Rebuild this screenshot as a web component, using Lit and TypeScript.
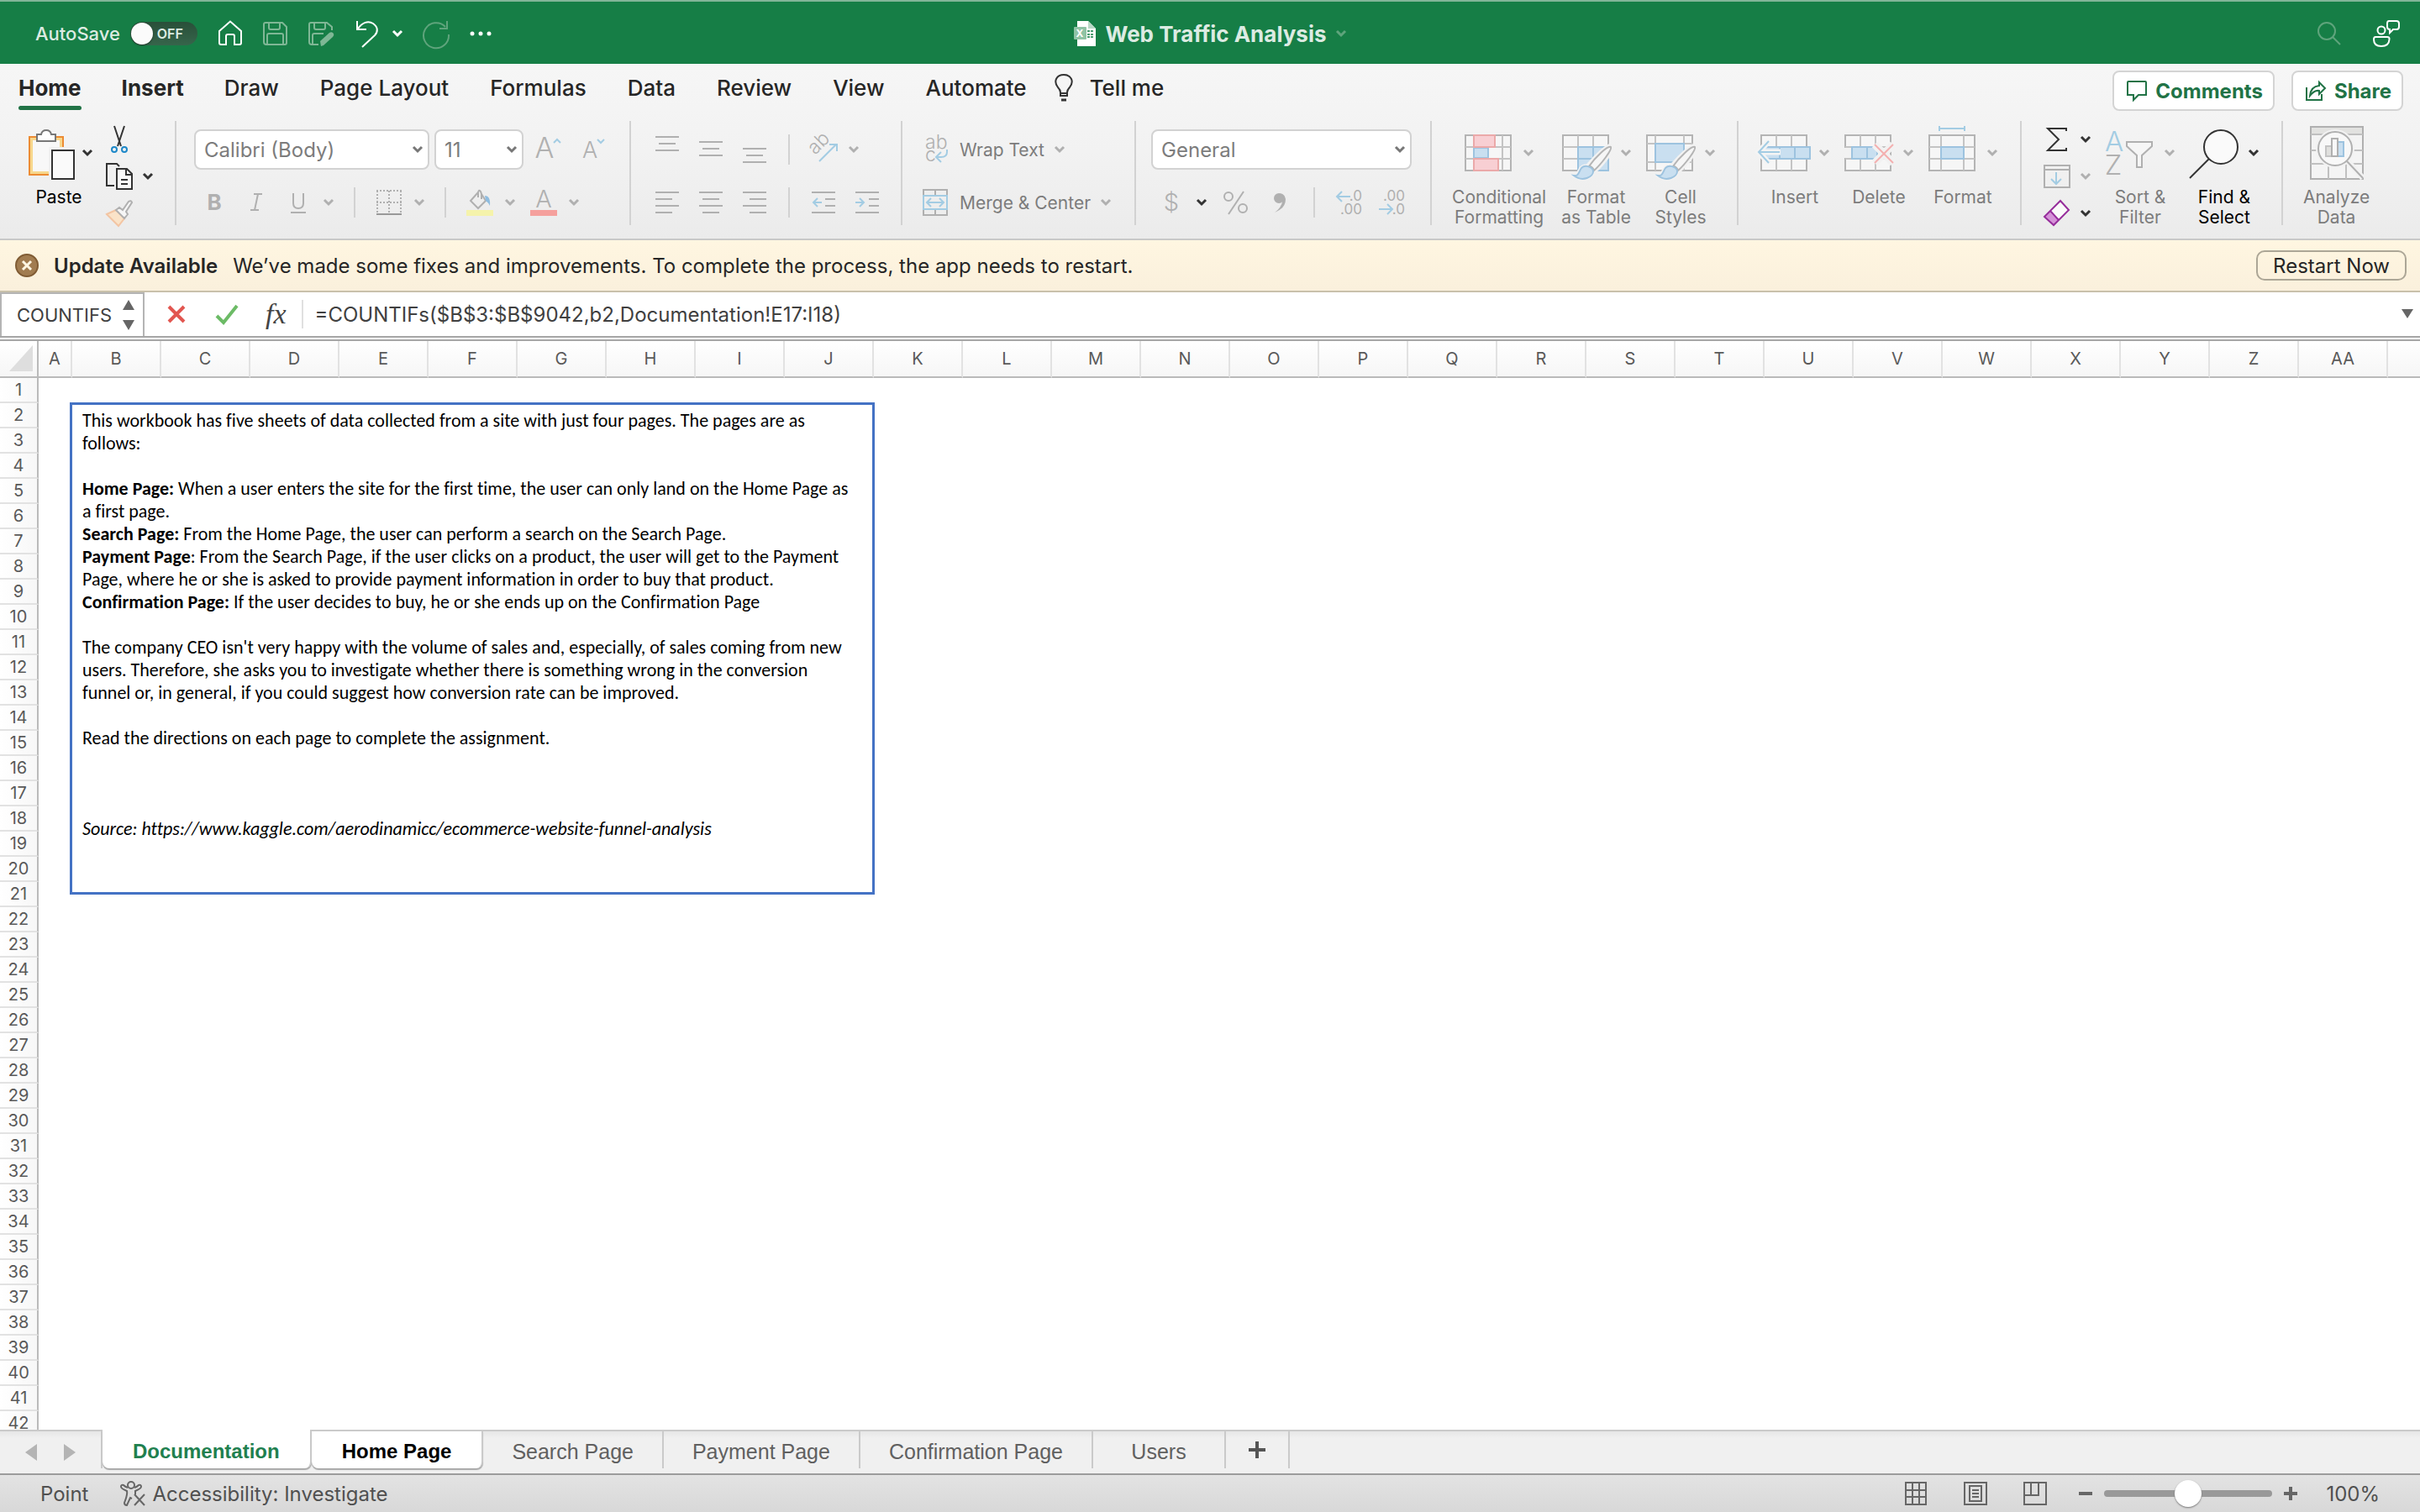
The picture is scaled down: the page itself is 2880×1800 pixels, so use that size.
import { LitElement, html, svg, css, nothing, TemplateResult, SVGTemplateResult } from "lit";
import { customElement, property, state } from "lit/decorators.js";
import { classMap } from "lit/directives/class-map.js";

const G = "#b0b0b0";
const B = "#a3cce3";
const D = "#333";
const GRID = "#b4b4b4";
const BLUE_LINE = "#9dc3df";
const BLUE_FILL = "#c9dff0";

type Icon = { w: number; h: number; art: SVGTemplateResult };

const brush = svg`
  <path d="M59 24 C61 27 46 46 39 52 L33 46 C40 38 55 23 59 24z" fill="#f6f6f6" stroke="#f2f2f2" stroke-width="7"/>
  <path d="M14 59 C20 59 20 54 23 50 C27 46 35 48 37 53 C38 61 24 67 14 59z" fill="#f2f2f2" stroke="#f2f2f2" stroke-width="5"/>
  <path d="M58 25 C60 28 46 46 38 53 C37 50 35 48 32 48 C39 38 54 23 58 25z" fill="#f6f6f6" stroke="${GRID}" stroke-width="2"/>
  <path d="M14 59 C20 60 20 54 23 50 C27 46 35 48 37 53 C38 61 24 67 14 59z" fill="${BLUE_FILL}" stroke="${BLUE_LINE}" stroke-width="2"/>`;

const lines = (rows: number[][]) => svg`<path d="${rows.map(([x, y, w]) => `M${x} ${y}h${w}`).join("")}" stroke="${G}" stroke-width="2"/>`;

const icons: Record<string, Icon> = {
  home: { w: 30, h: 32, art: svg`<path d="M2 13 L15 1.500 L28 13 V27 Q28 29 26 29 H20 V19 Q20 17 18 17 H12 Q10 17 10 19 V29 H4 Q2 29 2 27z" stroke="#fff" stroke-width="2"/>` },
  save: { w: 30, h: 32, art: svg`<g stroke="#7fb795" stroke-width="2"><path d="M3 3 H23 L28 8 V27 Q28 29 26 29 H4 Q1 29 1 26 V5 Q1 3 3 3z"/><path d="M7 3 V9 Q7 11 9 11 H18 Q20 11 20 9 V3"/><path d="M5 29 V18 Q5 16 7 16 H22 Q24 16 24 18 V29"/></g>` },
  saveAs: { w: 32, h: 32, art: svg`<g stroke="#7fb795" stroke-width="2"><path d="M12 29 H4 Q1 29 1 26 V5 Q1 3 3 3 H22 L28 8 V12"/><path d="M7 3 V9 Q7 11 9 11 H18 Q20 11 20 9 V3"/><path d="M5 29 V18 Q5 16 7 16 H18"/></g><path d="M15 31 L14 25 L25 15 Q28 13 30 16 Q31 18 29 20 L18 30z" fill="#7fb795"/>` },
  undo: { w: 28, h: 32, art: svg`<path d="M2 1 V11 H13 M3 10 C8 3 15 0 21 4 C27 8 27 14 23 18 L8 32" stroke="#fff" stroke-width="2"/>` },
  redo: { w: 32, h: 32, art: svg`<path d="M29 1 V10 H20 M27 8 A15 15 0 1 0 31 17" stroke="#5fa47c" stroke-width="2"/>` },
  dots: { w: 26, h: 32, art: svg`<g fill="#fff"><circle cx="3" cy="16" r="2.500"/><circle cx="13" cy="16" r="2.500"/><circle cx="23" cy="16" r="2.500"/></g>` },
  workbook: { w: 26, h: 30, art: svg`<path d="M4 0 H17 L26 9 V30 H4z" fill="#fff"/><path d="M17 0 V9 H26z" fill="#b9d8c6"/><rect y="7" width="15" height="15" rx="1" fill="#8fc3a5"/><path d="M16 12h3m1 0h3M16 16h3m1 0h3M16 19h3m1 0h3" stroke="#4a9c70" stroke-width="2"/><text x="7" y="19" text-anchor="middle" font-size="12" font-weight="700" fill="#fff">X</text>` },
  search: { w: 28, h: 28, art: svg`<g stroke="#5fa47c" stroke-width="2"><circle cx="11" cy="11" r="10"/><path d="M18 18 L27 27"/></g>` },
  person: { w: 32, h: 32, art: svg`<g stroke="#fff" stroke-width="2"><circle cx="10" cy="12" r="4.500"/><path d="M3 20 H17 Q20 20 19.500 23 Q19 31 10 31 Q1 31 1 23 Q1 20 3 20z"/><path d="M19 1 H28 Q31 1 31 4 V8 Q31 11 28 11 H24 L20 15 V11 Q17 11 17 8 V4 Q17 1 19 1z"/></g>` },
  bulb: { w: 22, h: 36, art: svg`<path d="M7 27 V23 Q7 20 4 17 C-2 9 3 2 11 2 C19 2 24 9 18 17 Q15 20 15 23 V27z M7 24 H15 M8 32h6" stroke="${D}" stroke-width="2"/><path d="M8 32h6" stroke="${D}" stroke-width="3"/>` },
  comment: { w: 24, h: 24, art: svg`<path d="M1 2 Q1 1 2 1 H22 Q23 1 23 2 V17 H14 L8 23 V17 H1z" stroke="#217346" stroke-width="2"/>` },
  share: { w: 24, h: 24, art: svg`<path d="M1 8 V23 H19 V16" stroke="#217346" stroke-width="2"/><path d="M16 2 L23 9 L16 16 V12 Q10 11 5 18 Q6 7 16 6z" stroke="#217346" stroke-width="2"/>` },
  paste: { w: 58, h: 64, art: svg`<rect x="5" y="13" width="40" height="45" fill="#f7d78c" stroke="#ec8b33" stroke-width="2"/><rect x="9" y="17" width="32" height="37" fill="#f8f8f8"/><path d="M14 10 H19 Q20 5 25 5 Q30 5 31 10 H36 V18 H14z" fill="#fff" stroke="#777" stroke-width="2"/><rect x="28" y="25" width="32" height="39" fill="#f2f2f2"/><rect x="32" y="29" width="26" height="34" fill="#fafafa" stroke="${D}" stroke-width="2"/>` },
  cut: { w: 32, h: 32, art: svg`<path d="M10 0 L18 24 M22 0 L14 24" stroke="${D}" stroke-width="2"/><g stroke="#1e88c8" stroke-width="2"><circle cx="10" cy="28" r="3"/><circle cx="22" cy="28" r="3"/></g>` },
  copy: { w: 32, h: 32, art: svg`<g stroke="${D}" stroke-width="2"><path d="M10 27 H1 V1 H13 L16 4"/><path d="M13 7 H25 L31 13 V31 H13z" fill="#fafafa"/><path d="M24 7 V14 H31 M18 20h8 M18 25h8"/></g>` },
  painter: { w: 32, h: 32, art: svg`<path d="M1 17 L12 12 L22 22 L15 31z" fill="#fae3c8" stroke="#f3c5a3" stroke-width="2"/><path d="M12 12 L16 9 L20 12 L27 2 Q30 0 31 3 L24 14 L26 17 L22 22z" fill="#f6f6f6" stroke="${G}" stroke-width="2"/>` },
  growFont: { w: 32, h: 32, art: svg`<text x="11" y="26" text-anchor="middle" font-size="34" font-weight="300" fill="${G}">A</text><path d="M22 8 L26 4 L30 8" stroke="${B}" stroke-width="2"/>` },
  shrinkFont: { w: 32, h: 32, art: svg`<text x="11" y="26" text-anchor="middle" font-size="27" font-weight="300" fill="${G}">A</text><path d="M20 4 L24 8 L28 4" stroke="${B}" stroke-width="2"/>` },
  bold: { w: 32, h: 32, art: svg`<text x="16" y="25" text-anchor="middle" font-size="26" font-weight="700" fill="${G}">B</text>` },
  italic: { w: 32, h: 32, art: svg`<path d="M13 6h10M9 25h10M18 6l-4 19" stroke="${G}" stroke-width="2"/>` },
  underline: { w: 32, h: 32, art: svg`<path d="M10 5v12q0 6 6 6q6 0 6-6v-12M7 28h18" stroke="${G}" stroke-width="2"/>` },
  borders: { w: 32, h: 32, art: svg`<path d="M1 2H31M1 16H31" stroke="${G}" stroke-width="2" stroke-dasharray="2 2"/><path d="M2 2V28M16 2V28M30 2V28" stroke="${G}" stroke-width="2" stroke-dasharray="2 2"/><path d="M1 30H31" stroke="#999" stroke-width="2"/>` },
  fill: { w: 32, h: 32, art: svg`<rect y="25" width="32" height="7" fill="#f5f3ab"/><path d="M14 4 L5 14 L14 23 L23 14 L18 6 V12 M14 10 V4 Q15 0 17 3 L18 6" stroke="${G}" stroke-width="2"/><path d="M22 8 Q29 8 28 20 Q26 16 23 14z" fill="#8fbde0"/>` },
  fontColor: { w: 32, h: 32, art: svg`<rect y="25" width="32" height="7" fill="#f5a09d"/><text x="16" y="22" text-anchor="middle" font-size="29" font-weight="300" fill="${G}">A</text>` },
  vTop: { w: 28, h: 32, art: lines([[0, 1, 28], [4, 9, 20], [0, 17, 28]]) },
  vMid: { w: 28, h: 32, art: lines([[0, 7, 28], [4, 15, 20], [0, 23, 28]]) },
  vBottom: { w: 28, h: 32, art: lines([[0, 15, 28], [4, 23, 20], [0, 31, 28]]) },
  left: { w: 28, h: 32, art: lines([[0, 4, 28], [0, 12, 20], [0, 20, 28], [0, 28, 20]]) },
  center: { w: 28, h: 32, art: lines([[0, 4, 28], [4, 12, 20], [0, 20, 28], [4, 28, 20]]) },
  right: { w: 28, h: 32, art: lines([[0, 4, 28], [8, 12, 20], [0, 20, 28], [8, 28, 20]]) },
  outdent: { w: 28, h: 32, art: svg`${lines([[0, 4, 28], [16, 12, 12], [16, 20, 12], [0, 28, 28]])}<path d="M12 16H2M7 11L2 16L7 21" stroke="${B}" stroke-width="2"/>` },
  indent: { w: 28, h: 32, art: svg`${lines([[0, 4, 28], [16, 12, 12], [16, 20, 12], [0, 28, 28]])}<path d="M0 16H10M5 11L10 16L5 21" stroke="${B}" stroke-width="2"/>` },
  orient: { w: 32, h: 32, art: svg`<text x="4" y="23" font-size="23" font-weight="300" fill="${G}" transform="rotate(-45 4 23)">ab</text><path d="M9 30L29 10M21 10H30V18" stroke="${B}" stroke-width="2"/>` },
  wrap: { w: 32, h: 32, art: svg`<g font-size="23" font-weight="300" fill="${G}"><text x="3" y="15">ab</text><text x="3" y="30">c</text></g><path d="M29 16V19Q29 25 22 25H16M22 19L16 25L22 31" stroke="${B}" stroke-width="2"/>` },
  merge: { w: 32, h: 32, art: svg`<g stroke="${G}" stroke-width="2"><path d="M1 8V1H29V8M1 24V31H29V24M15 1V8M15 24V31"/></g><g stroke="${B}" stroke-width="2"><rect x="1" y="8" width="28" height="16"/><path d="M5 16H25M10 11L5 16L10 21M20 11L25 16L20 21"/></g>` },
  dollar: { w: 32, h: 32, art: svg`<text x="16" y="26" text-anchor="middle" font-size="29" font-weight="300" fill="${G}">$</text>` },
  percent: { w: 32, h: 32, art: svg`<g stroke="${G}" stroke-width="2"><circle cx="7" cy="9" r="5"/><circle cx="24" cy="23" r="5"/><path d="M25 3L7 30"/></g>` },
  comma: { w: 32, h: 32, art: svg`<path d="M16 5A6 6 0 1 0 16 17Q19 17 20 15Q19 22 11 28Q24 23 24 12Q23 5 16 5z" fill="${G}"/>` },
  incDec: { w: 32, h: 32, art: svg`<g font-size="17" fill="${G}" text-anchor="end"><text x="31" y="14">.0</text><text x="31" y="30">.00</text></g><path d="M17 9H1M7 3L1 9L7 15" stroke="${B}" stroke-width="2"/>` },
  decDec: { w: 32, h: 32, art: svg`<g font-size="17" fill="${G}" text-anchor="end"><text x="31" y="14">.00</text><text x="31" y="30">.0</text></g><path d="M0 24H16M10 18L16 24L10 30" stroke="${B}" stroke-width="2"/>` },
  conditional: { w: 60, h: 64, art: svg`<rect x="1" y="11" width="54" height="42" fill="#f6f6f6" stroke="${GRID}" stroke-width="2"/><path d="M1 25H55M1 39H55M45 11V53M36 11V25" stroke="#c4c4c4" stroke-width="2"/><rect x="11" y="26" width="17" height="12" fill="${BLUE_FILL}" stroke="${BLUE_LINE}" stroke-width="2"/><rect x="11" y="11" width="25" height="14" fill="#f8cfd3" stroke="#eba9a9" stroke-width="2"/><rect x="11" y="39" width="29" height="14" fill="#f8cfd3" stroke="#eba9a9" stroke-width="2"/>` },
  formatTable: { w: 60, h: 64, art: svg`<rect x="1" y="11" width="54" height="42" fill="#f6f6f6" stroke="${GRID}" stroke-width="2"/><path d="M1 25H55M1 39H19M19 11V53M37 11V25" stroke="#c4c4c4" stroke-width="2"/><rect x="19" y="25" width="36" height="28" fill="${BLUE_FILL}" stroke="${BLUE_LINE}" stroke-width="2"/><path d="M37 25V53M19 39H55" stroke="${BLUE_LINE}" stroke-width="2"/>${brush}` },
  cellStyles: { w: 60, h: 64, art: svg`<rect x="1" y="11" width="54" height="42" fill="#f6f6f6" stroke="${GRID}" stroke-width="2"/><path d="M1 21H55M1 43H55M11 11V53M45 11V53" stroke="#c4c4c4" stroke-width="2"/><rect x="11" y="21" width="34" height="22" fill="${BLUE_FILL}" stroke="${BLUE_LINE}" stroke-width="2"/>${brush}` },
  insertCells: { w: 60, h: 64, art: svg`<rect x="1" y="11" width="54" height="42" fill="#f6f6f6" stroke="${GRID}" stroke-width="2"/><path d="M19 11V53M37 11V53" stroke="#c4c4c4" stroke-width="2"/><rect x="5" y="25" width="54" height="14" fill="${BLUE_FILL}" stroke="${BLUE_LINE}" stroke-width="2"/><path d="M23 25V39M41 25V39" stroke="${BLUE_LINE}" stroke-width="2"/><path d="M24 31H-1M10 18L-2 31L10 44" stroke="#f4f4f4" stroke-width="7"/><path d="M23 31H-1M10 18L-2 31L10 44" stroke="${B}" stroke-width="2"/>` },
  deleteCells: { w: 60, h: 64, art: svg`<rect x="1" y="11" width="54" height="42" fill="#f6f6f6" stroke="${GRID}" stroke-width="2"/><path d="M19 11V53M37 11V53M1 25H55M1 39H55" stroke="#c4c4c4" stroke-width="2"/><rect x="0" y="26" width="9" height="12" fill="#f2f2f2"/><rect x="9" y="25" width="30" height="14" fill="${BLUE_FILL}" stroke="${BLUE_LINE}" stroke-width="2"/><path d="M27 25V39" stroke="${BLUE_LINE}" stroke-width="2"/><path d="M36 22L58 44M58 22L36 44" stroke="#f2f2f2" stroke-width="9"/><path d="M36 22L58 44M58 22L36 44" stroke="#f4b0b0" stroke-width="2"/>` },
  formatCells: { w: 60, h: 64, art: svg`<rect x="1" y="11" width="54" height="42" fill="#f6f6f6" stroke="${GRID}" stroke-width="2"/><path d="M1 25H55M1 39H55M15 11V53M42 11V53" stroke="#c4c4c4" stroke-width="2"/><rect x="15" y="25" width="27" height="14" fill="${BLUE_FILL}" stroke="${BLUE_LINE}" stroke-width="2"/><path d="M13 3H43M13 0V6M43 0V6" stroke="${B}" stroke-width="2"/>` },
  sum: { w: 32, h: 32, art: svg`<path d="M27 6V3H5L18 16L5 29H27V26" stroke="${D}" stroke-width="2"/>` },
  fillDown: { w: 32, h: 32, art: svg`<g stroke="${G}" stroke-width="2"><rect x="1" y="3" width="30" height="26"/><path d="M1 8H31"/></g><path d="M15 11V25M9 19L15 25L21 19" stroke="${B}" stroke-width="2"/>` },
  eraser: { w: 32, h: 32, art: svg`<path d="M1 20L20 1L30 12L12 30z" fill="#fafafa"/><path d="M1 20L8 13L18 24L12 30z" fill="#d592d8"/><path d="M1 20L20 1L30 12L12 30zM8 13L18 24" stroke="#962d9b" stroke-width="2"/>` },
  sortFilter: { w: 60, h: 64, art: svg`<text x="10" y="30" text-anchor="middle" font-size="33" font-weight="300" fill="${B}">A</text><text x="9" y="58" text-anchor="middle" font-size="33" font-weight="300" fill="${G}">Z</text><path d="M25 19H55V24L43 35V49H37V35L25 24z" fill="#f6f6f6" stroke="${G}" stroke-width="2"/>` },
  find: { w: 60, h: 64, art: svg`<circle cx="37" cy="25" r="20" fill="#fafafa" stroke="${D}" stroke-width="2"/><path d="M23 39L0 62" stroke="${D}" stroke-width="2"/>` },
  analyze: { w: 64, h: 64, art: svg`<rect x="1" y="1" width="62" height="62" fill="#f4f4f4" stroke="${G}" stroke-width="2"/><rect x="2" y="2" width="60" height="8" fill="#e2e2e0"/><path d="M1 10H63M1 29H63M1 45H63M22 45V63M43 45V63" stroke="#c0c0c0" stroke-width="2"/><circle cx="30" cy="27" r="23" fill="#f2f2f2"/><path d="M44 41L63 62" stroke="#f2f2f2" stroke-width="7"/><circle cx="30" cy="27" r="20" fill="#f8f8f8" stroke="${G}" stroke-width="2"/><path d="M44 42L63 62" stroke="${G}" stroke-width="2"/><rect x="19" y="24" width="7" height="12" fill="#e0e0de" stroke="#c4c4c4" stroke-width="2"/><rect x="33" y="19" width="7" height="17" fill="${BLUE_FILL}" stroke="${BLUE_LINE}" stroke-width="2"/><rect x="26" y="15" width="7" height="21" fill="#f8f8f8" stroke="${G}" stroke-width="2"/>` },
  dismiss: { w: 28, h: 28, art: svg`<circle cx="14" cy="14" r="13" fill="#a17c50" stroke="#805c34" stroke-width="2"/><path d="M9 9L19 19M19 9L9 19" stroke="#fff6e2" stroke-width="3"/>` },
  cancel: { w: 28, h: 28, art: svg`<path d="M5 5L23 23M23 5L5 23" stroke="#e25650" stroke-width="4"/>` },
  accept: { w: 28, h: 28, art: svg`<path d="M2 16L10 24L26 4" stroke="#6cbb66" stroke-width="4"/>` },
  stepper: { w: 14, h: 36, art: svg`<path d="M7 0L14 12H0zM7 36L0 24H14z" fill="#666"/>` },
  expand: { w: 14, h: 12, art: svg`<path d="M0 0H14L7 11z" fill="#666"/>` },
  corner: { w: 28, h: 32, art: svg`<path d="M28 0V31H0z" fill="#dedede"/>` },
  prev: { w: 14, h: 20, art: svg`<path d="M14 0V20L0 10z" fill="#b4b4b4"/>` },
  next: { w: 14, h: 20, art: svg`<path d="M0 0V20L14 10z" fill="#b4b4b4"/>` },
  add: { w: 20, h: 20, art: svg`<path d="M10 0V20M0 10H20" stroke="#555" stroke-width="4"/>` },
  access: { w: 30, h: 30, art: svg`<g stroke="#666" stroke-width="2"><circle cx="13" cy="5" r="4"/><path d="M9 8Q6 7 4 5Q1 4 1 7Q1 9 8 12Q9 16 5 26Q5 29 8 29L12 20L14 21M17 8Q20 7 22 5Q25 4 25 7Q25 9 18 12V16"/><path d="M17 16L29 29M29 16L17 29"/></g>` },
  normalView: { w: 28, h: 28, art: svg`<path d="M2 1H26V27H2zM10 1V27M18 1V27M2 10H26M2 18H26" stroke="#666" stroke-width="2"/>` },
  layoutView: { w: 28, h: 28, art: svg`<path d="M1 1H27V27H1zM7 5H21V23H7zM10 10H18M10 14H18M10 18H18" stroke="#666" stroke-width="2"/>` },
  breakView: { w: 28, h: 28, art: svg`<path d="M1 1H27V27H1zM1 16H18V1M9 1V16" stroke="#666" stroke-width="2"/>` },
  minus: { w: 16, h: 16, art: svg`<path d="M0 8H16" stroke="#666" stroke-width="4"/>` },
  plus: { w: 16, h: 16, art: svg`<path d="M0 8H16M8 0V16" stroke="#666" stroke-width="4"/>` },
};

const icon = (name: string) => {
  const i = icons[name];
  return html`<svg width=${i.w} height=${i.h} viewBox="0 0 ${i.w} ${i.h}" fill="none" aria-hidden="true">${i.art}</svg>`;
};

const chevron = (color: string) => html`<svg width="12" height="8" viewBox="0 0 12 8" fill="none" aria-hidden="true"><path d="M1 1L6 6L11 1" stroke=${color} stroke-width="3"/></svg>`;

const shared = css`
  :host, * { box-sizing: border-box; }
  svg { display: block; flex: none; overflow: visible; }
  button, input, select {
    font: inherit; color: inherit; background: none; border: 0; margin: 0; padding: 0; border-radius: 0; outline: 0;
    appearance: none;
  }
  button { display: flex; align-items: center; justify-content: center; white-space: nowrap; }
`;

@customElement("title-bar")
export class TitleBar extends LitElement {
  static styles = [shared, css`
    :host {
      display: grid; grid-template-columns: 1fr auto 1fr; align-items: center; height: 76px; padding: 2px 24px 0;
      background: #167e46; border-top: 2px solid #82b598; color: #dcebe2;
    }
    .side { display: flex; align-items: center; gap: 24px; padding-left: 18px; }
    .side.end { justify-content: flex-end; gap: 38px; }
    .autosave { display: flex; align-items: center; gap: 12px; font-size: 22px; font-weight: 500; }
    .switch { display: grid; align-items: center; width: 80px; height: 28px; }
    .switch > * { grid-area: 1 / 1; }
    .switch input { width: 80px; height: 28px; border-radius: 14px; background: linear-gradient(#294f39, #36654b); }
    .knob { width: 26px; height: 26px; margin-left: 1px; border-radius: 50%; background: #fbfbfb; box-shadow: 0 1px 2px #1a3324; }
    .off { justify-self: end; margin-right: 17px; font-size: 16px; font-weight: 600; }
    .pair { display: flex; align-items: center; gap: 16px; }
    .title { display: flex; align-items: center; gap: 11px; font-size: 26px; font-weight: 700; }
  `];
  render() {
    return html`
      <div class="side">
        <label class="autosave">AutoSave
          <span class="switch"><input type="checkbox" role="switch" /><span class="knob"></span><span class="off">OFF</span></span>
        </label>
        <button aria-label="Home">${icon("home")}</button>
        <button aria-label="Save" disabled>${icon("save")}</button>
        <button aria-label="Save as" disabled>${icon("saveAs")}</button>
        <button class="pair" aria-label="Undo">${icon("undo")}${chevron("#fff")}</button>
        <button aria-label="Redo" disabled>${icon("redo")}</button>
        <button aria-label="More">${icon("dots")}</button>
      </div>
      <button class="title">${icon("workbook")}<span>Web Traffic Analysis</span>${chevron("#5fa47c")}</button>
      <div class="side end">
        <button aria-label="Search">${icon("search")}</button>
        <button aria-label="Account">${icon("person")}</button>
      </div>`;
  }
}

@customElement("ribbon-bar")
export class RibbonBar extends LitElement {
  @state() private active = "Home";

  static styles = [shared, css`
    :host {
      display: block; background: linear-gradient(#f6f6f6, #f2f2f2 50%, #ebebeb);
      border-top: 1px solid #fff; border-bottom: 2px solid #c8c8c8;
    }
    .tabs { display: flex; align-items: flex-start; height: 67px; padding: 0 20px 0 22px; }
    .tab {
      display: block; margin: 10px 49px 0 0; font-size: 26px; line-height: 36px; font-weight: 500; color: #262626;
    }
    .tab.strong { font-weight: 700; margin-right: 48px; }
    .tab.active::after { content: ""; display: block; height: 5px; margin-top: 3px; border-radius: 3px; background: #217346; }
    .tell { display: flex; gap: 20px; margin-left: -16px; }
    .actions { display: flex; gap: 20px; margin: 7px 0 0 auto; }
    .action {
      height: 48px; padding: 0 12px 0 15px; gap: 10px; border: 2px solid #d4d4d4; border-radius: 8px; background: #fff;
      color: #217346; font-size: 24px; font-weight: 700;
    }
    .groups { display: flex; height: 140px; padding-bottom: 16px; color: #7c7c7c; font-size: 21px; }
    .group { flex: none; border-right: 2px solid #d2d2d2; }
    .group:last-child { border-right: 0; }
    .group.big { display: flex; gap: 18px; padding: 6px 27px 0 26px; }
    .group.clip { gap: 16px; padding-left: 30px; padding-right: 26px; }
    .group.styles { padding-left: 24px; padding-right: 26px; }
    .group.font { padding: 10px 26px 0 21px; }
    .group.align { padding: 10px 26px 0 29px; }
    .group.wrap { padding: 10px 28px 0 24px; }
    .group.number { padding: 10px 22px 0 18px; }
    .row { display: flex; align-items: center; height: 48px; }
    .row + .row { height: 34px; margin-top: 22px; }
    .font .row { gap: 6px; }
    .font .row .first { margin-left: 8px; }
    .font .row .second { margin-left: 16px; }
    .font .row + .row { gap: 18px; padding-left: 8px; }
    .number .row + .row { gap: 19px; padding-left: 8px; }
    .align .row { gap: 24px; }
    .sep { width: 2px; height: 36px; margin: 0 6px; background: #d2d2d2; }
    .align .sep { margin: 0 2px; }
    .split { gap: 14px; }
    .split.near { gap: 12px; }
    .wide { gap: 12px; }
    .pick { display: grid; align-items: center; }
    .pick > * { grid-area: 1 / 1; }
    .pick select {
      height: 48px; width: 280px; padding: 0 10px; border: 2px solid #d2d2d2; border-radius: 8px; background: #fff;
      font-size: 24px; color: #7c7c7c; opacity: 1;
    }
    .pick.size select { width: 106px; }
    .pick.format select { width: 310px; }
    .pick svg { justify-self: end; margin-right: 8px; pointer-events: none; }
    .cmd { display: flex; flex-direction: column; align-items: center; justify-content: flex-start; gap: 9px; line-height: 24px; }
    .cmd .top { display: flex; align-items: center; gap: 10px; }
    .cmd.dark { color: #000; }
    .stack { display: flex; flex-direction: column; align-items: flex-start; gap: 12px; }
  `];

  private split(name: string, label: string, color = G, cls = "") {
    return html`<button class="split ${cls}" aria-label=${label}>${icon(name)}${chevron(color)}</button>`;
  }
  private cmd(name: string, label: string[], opts: { color?: string; plain?: boolean } = {}) {
    return html`<button class=${classMap({ cmd: true, dark: opts.color === D })}>
      <span class="top">${icon(name)}${opts.plain ? nothing : chevron(opts.color ?? G)}</span>
      <span>${label[0]}${label[1] ? html`<br />${label[1]}` : nothing}</span>
    </button>`;
  }
  private btn(name: string, label: string, cls = "") {
    return html`<button class=${cls} aria-label=${label}>${icon(name)}</button>`;
  }
  private pick(value: string, label: string, cls = "") {
    return html`<span class="pick ${cls}"><select aria-label=${label}><option>${value}</option></select>${chevron("#777")}</span>`;
  }

  render() {
    const tabs = ["Home", "Insert", "Draw", "Page Layout", "Formulas", "Data", "Review", "View", "Automate"];
    return html`
      <nav class="tabs">
        ${tabs.map((t, i) => html`<button class=${classMap({ tab: true, strong: i < 2, active: t === this.active })}
          @click=${() => (this.active = t)}>${t}</button>`)}
        <button class="tab tell">${icon("bulb")}<span>Tell me</span></button>
        <div class="actions">
          <button class="action">${icon("comment")}<span>Comments</span></button>
          <button class="action">${icon("share")}<span>Share</span></button>
        </div>
      </nav>
      <div class="groups">
        <div class="group big clip">
          ${this.cmd("paste", ["Paste"], { color: D })}
          <div class="stack">
            ${this.btn("cut", "Cut")}
            ${this.split("copy", "Copy", D, "near")}
            ${this.btn("painter", "Format painter")}
          </div>
        </div>
        <div class="group font">
          <div class="row">
            ${this.pick("Calibri (Body)", "Font")}
            ${this.pick("11", "Font size", "size")}
            ${this.btn("growFont", "Increase font size", "first")}
            ${this.btn("shrinkFont", "Decrease font size", "second")}
          </div>
          <div class="row">
            ${this.btn("bold", "Bold")}${this.btn("italic", "Italic")}${this.split("underline", "Underline")}
            <span class="sep"></span>
            ${this.split("borders", "Borders")}
            <span class="sep"></span>
            ${this.split("fill", "Fill colour")}${this.split("fontColor", "Font colour")}
          </div>
        </div>
        <div class="group align">
          <div class="row">
            ${this.btn("vTop", "Align top")}${this.btn("vMid", "Align middle")}${this.btn("vBottom", "Align bottom")}
            <span class="sep"></span>
            ${this.split("orient", "Orientation", G, "near")}
          </div>
          <div class="row">
            ${this.btn("left", "Align left")}${this.btn("center", "Align centre")}${this.btn("right", "Align right")}
            <span class="sep"></span>
            ${this.btn("outdent", "Decrease indent")}${this.btn("indent", "Increase indent")}
          </div>
        </div>
        <div class="group wrap">
          <div class="row"><button class="wide">${icon("wrap")}<span>Wrap Text</span>${chevron(G)}</button></div>
          <div class="row"><button class="wide">${icon("merge")}<span>Merge &amp; Center</span>${chevron(G)}</button></div>
        </div>
        <div class="group number">
          <div class="row">${this.pick("General", "Number format", "format")}</div>
          <div class="row">
            ${this.split("dollar", "Currency", D)}${this.btn("percent", "Percent")}${this.btn("comma", "Comma style")}
            <span class="sep"></span>
            ${this.btn("incDec", "Increase decimal")}${this.btn("decDec", "Decrease decimal")}
          </div>
        </div>
        <div class="group big styles">
          ${this.cmd("conditional", ["Conditional", "Formatting"])}
          ${this.cmd("formatTable", ["Format", "as Table"])}
          ${this.cmd("cellStyles", ["Cell", "Styles"])}
        </div>
        <div class="group big">
          ${this.cmd("insertCells", ["Insert"])}${this.cmd("deleteCells", ["Delete"])}${this.cmd("formatCells", ["Format"])}
        </div>
        <div class="group big">
          <div class="stack">
            ${this.split("sum", "AutoSum", D, "near")}${this.split("fillDown", "Fill", G, "near")}${this.split("eraser", "Clear", D, "near")}
          </div>
          ${this.cmd("sortFilter", ["Sort &", "Filter"])}
          ${this.cmd("find", ["Find &", "Select"], { color: D })}
        </div>
        <div class="group big styles">${this.cmd("analyze", ["Analyze", "Data"], { plain: true })}</div>
      </div>`;
  }
}

@customElement("update-banner")
export class UpdateBanner extends LitElement {
  static styles = [shared, css`
    :host {
      display: flex; align-items: center; gap: 18px; height: 62px; padding: 0 16px 0 18px;
      background: linear-gradient(#fff6e1, #faf0dc); border-bottom: 2px solid #c9c1ab; color: #262626; font-size: 24px;
    }
    strong { font-weight: 600; }
    .restart { margin-left: auto; height: 36px; padding: 0 18px; border: 2px solid #aca696; border-radius: 10px; }
  `];
  render() {
    return html`<button aria-label="Dismiss">${icon("dismiss")}</button>
      <strong>Update Available</strong>
      <span>We’ve made some fixes and improvements. To complete the process, the app needs to restart.</span>
      <button class="restart">Restart Now</button>`;
  }
}

@customElement("formula-bar")
export class FormulaBar extends LitElement {
  static styles = [shared, css`
    :host { display: flex; align-items: center; height: 58px; padding-right: 8px; background: #fff; border-bottom: 6px double #a6a6a6; color: #404040; font-size: 24px; }
    .name { display: flex; align-items: center; align-self: stretch; width: 172px; padding: 0 10px 0 18px; border: 2px solid #b4b4b4; border-bottom: 0; }
    .name input { flex: 1; min-width: 0; font-size: 22px; }
    .tools { display: flex; align-items: center; gap: 32px; padding: 0 14px 0 24px; }
    .fx { font: italic 34px/40px "Liberation Serif", serif; color: #444; }
    .formula { flex: 1; height: 34px; padding-left: 14px; margin-left: 4px; border-left: 2px solid #e0e0e0; }
  `];
  render() {
    return html`<div class="name"><input aria-label="Name box" .value=${"COUNTIFS"} /><button aria-label="Names">${icon("stepper")}</button></div>
      <div class="tools">
        <button aria-label="Cancel">${icon("cancel")}</button>
        <button aria-label="Enter">${icon("accept")}</button>
        <button class="fx" aria-label="Insert function">fx</button>
      </div>
      <input class="formula" aria-label="Formula" .value=${"=COUNTIFs($B$3:$B$9042,b2,Documentation!E17:I18)"} />
      <button aria-label="Expand formula bar">${icon("expand")}</button>`;
  }
}

const columnName = (i: number): string => (i < 26 ? String.fromCharCode(65 + i) : "A" + String.fromCharCode(65 + i - 26));

@customElement("work-sheet")
export class WorkSheet extends LitElement {
  @property({ type: Number }) rows = 42;
  @property({ type: Number }) columns = 27;

  static styles = [shared, css`
    :host { display: block; position: relative; flex: 1; min-height: 0; overflow: hidden; background: #fff; }
    table { width: 100%; table-layout: fixed; border-collapse: separate; border-spacing: 0; color: #595959; font-size: 20px; }
    .c-head { width: 46px; }
    .c-a { width: 40px; }
    .c { width: 106px; }
    th { padding: 0; font-weight: 400; text-align: center; }
    thead th { height: 44px; background: linear-gradient(#fff, #f6f6f6); border-bottom: 2px solid #bababa; border-right: 2px solid #e2e2e2; }
    thead .corner { border-right-color: #bababa; }
    thead .rest { border-right: 0; }
    .corner svg { margin-left: 11px; }
    tbody th { height: 30px; line-height: 28px; background: linear-gradient(90deg, #fff, #f7f7f7); border-bottom: 2px solid #e2e2e2; border-right: 2px solid #bababa; }
    td { padding: 0; }
    .note {
      position: absolute; left: 83px; top: 73px; width: 958px; height: 586px; padding: 5px 12px; border: 3px solid #4472c4;
      background: #fff; color: #000; font: 22px/27px Carlito, Lato, sans-serif; font-variant-ligatures: none; white-space: nowrap;
    }
    p { margin: 0 0 27px; }
    .source { margin-top: 81px; font-style: italic; }
  `];

  private note(): TemplateResult {
    return html`<section class="note">
      <p>This workbook has five sheets of data collected from a site with just four pages. The pages are as<br />follows:</p>
      <p>
        <b>Home Page:</b> When a user enters the site for the first time, the user can only land on the Home Page as<br />a first page.<br />
        <b>Search Page:</b> From the Home Page, the user can perform a search on the Search Page.<br />
        <b>Payment Page</b>: From the Search Page, if the user clicks on a product, the user will get to the Payment<br />Page, where he or she is asked to provide payment information in order to buy that product.<br />
        <b>Confirmation Page:</b> If the user decides to buy, he or she ends up on the Confirmation Page
      </p>
      <p>The company CEO isn't very happy with the volume of sales and, especially, of sales coming from new<br />users. Therefore, she asks you to investigate whether there is something wrong in the conversion<br />funnel or, in general, if you could suggest how conversion rate can be improved.</p>
      <p>Read the directions on each page to complete the assignment.</p>
      <p class="source">Source: https://www.kaggle.com/aerodinamicc/ecommerce-website-funnel-analysis</p>
    </section>`;
  }

  render() {
    const cols = Array.from({ length: this.columns }, (_, i) => i);
    const rows = Array.from({ length: this.rows }, (_, i) => i + 1);
    return html`<table>
        <colgroup><col class="c-head" />${cols.map((i) => html`<col class=${i ? "c" : "c-a"} />`)}<col /></colgroup>
        <thead><tr><th class="corner">${icon("corner")}</th>${cols.map((i) => html`<th scope="col">${columnName(i)}</th>`)}<th class="rest"></th></tr></thead>
        <tbody>${rows.map((r) => html`<tr><th scope="row">${r}</th>${cols.map(() => html`<td></td>`)}<td></td></tr>`)}</tbody>
      </table>${this.note()}`;
  }
}

@customElement("sheet-tabs")
export class SheetTabs extends LitElement {
  @state() private sheets = ["Documentation", "Home Page", "Search Page", "Payment Page", "Confirmation Page", "Users"];

  static styles = [shared, css`
    :host {
      display: flex; align-items: flex-start; height: 54px; background: linear-gradient(#e6e6e6, #f0f0f0 8px);
      border-top: 2px solid #cacaca; border-bottom: 2px solid #9c9c9c; color: #606060;
      font: 25px "Liberation Sans", Arial, sans-serif;
    }
    .arrows { display: flex; gap: 32px; width: 122px; padding: 15px 0 0 30px; border-right: 2px solid #cacaca; height: 44px; }
    .arrows button { height: 20px; }
    .tab { height: 44px; min-width: 158px; padding: 4px 34px 0; border-right: 2px solid #cacaca; }
    .tab.lit { background: #fff; color: #000; padding: 4px 36px 0; font-size: 24px; font-weight: 700; border-radius: 0 0 8px 8px; box-shadow: 0 2px 1px #a8a8a8; }
    .tab.current { height: 46px; margin-top: -2px; padding-top: 6px; color: #21804f; }
    .add { height: 44px; width: 76px; border-right: 2px solid #cacaca; }
  `];
  render() {
    return html`<div class="arrows"><button aria-label="Previous sheet">${icon("prev")}</button><button aria-label="Next sheet">${icon("next")}</button></div>
      ${this.sheets.map((s, i) => html`<button class=${classMap({ tab: true, lit: i < 2, current: i === 0 })}>${s}</button>`)}
      <button class="add" aria-label="Add sheet">${icon("add")}</button>`;
  }
}

@customElement("status-bar")
export class StatusBar extends LitElement {
  @state() private zoom = 100;

  static styles = [shared, css`
    :host {
      display: flex; align-items: center; gap: 38px; height: 44px; padding: 0 48px;
      background: linear-gradient(#e3e3e3, #d8d8d8); color: #505050; font-size: 24px;
    }
    .access { gap: 8px; }
    .views { display: flex; gap: 43px; margin-left: auto; }
    .zoom { display: flex; align-items: center; gap: 14px; margin-right: -4px; }
    input { width: 200px; height: 32px; }
    input::-webkit-slider-runnable-track { height: 8px; border-radius: 4px; background: #999; }
    input::-webkit-slider-thumb {
      appearance: none; width: 32px; height: 32px; margin-top: -12px; border-radius: 50%; background: #fff; box-shadow: 0 1px 2px #777;
    }
  `];
  render() {
    return html`<span>Point</span>
      <button class="access">${icon("access")}<span>Accessibility: Investigate</span></button>
      <div class="views">
        <button aria-label="Normal view">${icon("normalView")}</button>
        <button aria-label="Page layout view">${icon("layoutView")}</button>
        <button aria-label="Page break view">${icon("breakView")}</button>
      </div>
      <div class="zoom">
        <button aria-label="Zoom out">${icon("minus")}</button>
        <input type="range" aria-label="Zoom" min="0" max="200" .value=${String(this.zoom)}
          @input=${(e: Event) => (this.zoom = Number((e.target as HTMLInputElement).value))} />
        <button aria-label="Zoom in">${icon("plus")}</button>
      </div>
      <span>${this.zoom}%</span>`;
  }
}

@customElement("app-root")
export class AppRoot extends LitElement {
  static styles = css`
    :host { display: flex; flex-direction: column; height: 100vh; overflow: hidden; font-family: Inter, "Liberation Sans", sans-serif; }
  `;
  render() {
    return html`<title-bar></title-bar>
      <ribbon-bar></ribbon-bar>
      <update-banner></update-banner>
      <formula-bar></formula-bar>
      <work-sheet></work-sheet>
      <sheet-tabs></sheet-tabs>
      <status-bar></status-bar>`;
  }
}
